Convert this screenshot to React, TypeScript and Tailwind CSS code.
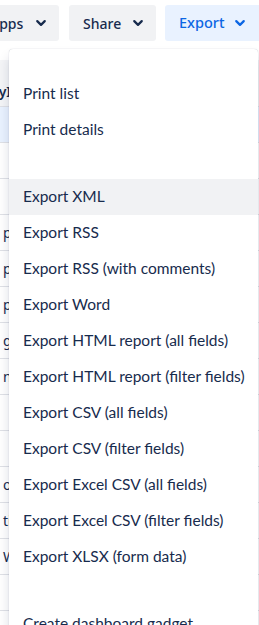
import React from "react";

const Chevron = ({ className }: { className?: string }) => (
  <svg viewBox="0 0 24 24" width="18" height="18" className={className} fill="none">
    <path d="M7 9.5 12 14.5l5-5" stroke="currentColor" strokeWidth="3" strokeLinecap="round" strokeLinejoin="round" />
  </svg>
);

const rows: string[] = ["", "", "Test p", "Test p", "Bug pair", "Bug g", "Bug n", "", "", "Bug of", "Bug ti", "Bug We", "", "Bug ec"];

const groupA = ["Print list", "Print details"];
const groupB = [
  "Export XML",
  "Export RSS",
  "Export RSS (with comments)",
  "Export Word",
  "Export HTML report (all fields)",
  "Export HTML report (filter fields)",
  "Export CSV (all fields)",
  "Export CSV (filter fields)",
  "Export Excel CSV (all fields)",
  "Export Excel CSV (filter fields)",
  "Export XLSX (form data)",
];
const groupC = ["Create dashboard gadget", "Add to dashboard"];

export default function App() {
  const font = { fontFamily: '"Noto Sans", "Open Sans", sans-serif' };
  const menuFont = { fontFamily: 'Lato, "Noto Sans", sans-serif' };
  return (
    <div className="relative w-[259px] h-[625px] overflow-hidden bg-white text-[#172b4d]" style={font}>
      {/* toolbar */}
      <div className="flex justify-end items-center h-[36px] mt-[5px] overflow-visible">
        <button className="shrink-0 flex items-center w-[83px] h-[36px] pl-[14px] pr-[9px] rounded-[3px] bg-[#f1f2f4] text-[14px] font-medium text-[#172b4d]">
          <span>Apps</span>
          <Chevron className="ml-auto" />
        </button>
        <button className="shrink-0 ml-[10px] flex items-center w-[87px] h-[36px] pl-[14px] pr-[9px] rounded-[3px] bg-[#f1f2f4] text-[14px] font-medium text-[#172b4d]">
          <span>Share</span>
          <Chevron className="ml-auto" />
        </button>
        <button className="shrink-0 ml-[9px] flex items-center w-[94px] h-[36px] pl-[14px] pr-[10px] rounded-l-[3px] bg-[#e9f2ff] text-[14px] font-medium text-[#0c66e4]">
          <span className="text-[14.5px]">Export</span>
          <Chevron className="ml-auto" />
        </button>
      </div>

      {/* background table */}
      <div className="mt-[19px] flex flex-col">
        <div className="h-[47px] bg-[#f4f5f7] border-b border-[#dfe1e6] flex items-center pt-[16px] text-[14px] font-semibold whitespace-nowrap overflow-hidden">
          <span className="ml-[-9px]">TyI</span>
        </div>
        <div className="h-[36px] bg-[#e9f2ff] border-b border-[#dfe1e6]" />
        {rows.map((r, i) => (
          <div key={i} className="h-[36px] border-b border-[#dfe1e6] flex items-center text-[14px] whitespace-nowrap overflow-hidden">
            <span className="ml-[-27px]">{r}</span>
          </div>
        ))}
      </div>

      {/* dropdown */}
      <div
        className="absolute left-[9px] top-[49px] w-[249px] h-[640px] bg-white rounded-[4px] shadow-[0_8px_12px_rgba(9,30,66,0.15),0_0_1px_rgba(9,30,66,0.31)]"
        style={menuFont}
      >
        <div className="pt-[27px]">
          {groupA.map((t) => (
            <div key={t} className="h-[36px] flex items-center px-[14px] text-[15.5px] whitespace-nowrap">{t}</div>
          ))}
        </div>
        <div className="pt-[31px]">
          {groupB.map((t, i) => (
            <div key={t} className={`h-[36px] flex items-center px-[14px] text-[15.5px] whitespace-nowrap ${i === 0 ? "bg-[#f1f2f4]" : ""}`}>{t}</div>
          ))}
        </div>
        <div className="pt-[31px]">
          {groupC.map((t) => (
            <div key={t} className="h-[36px] flex items-center px-[14px] text-[15.5px] whitespace-nowrap">{t}</div>
          ))}
        </div>
      </div>
    </div>
  );
}
